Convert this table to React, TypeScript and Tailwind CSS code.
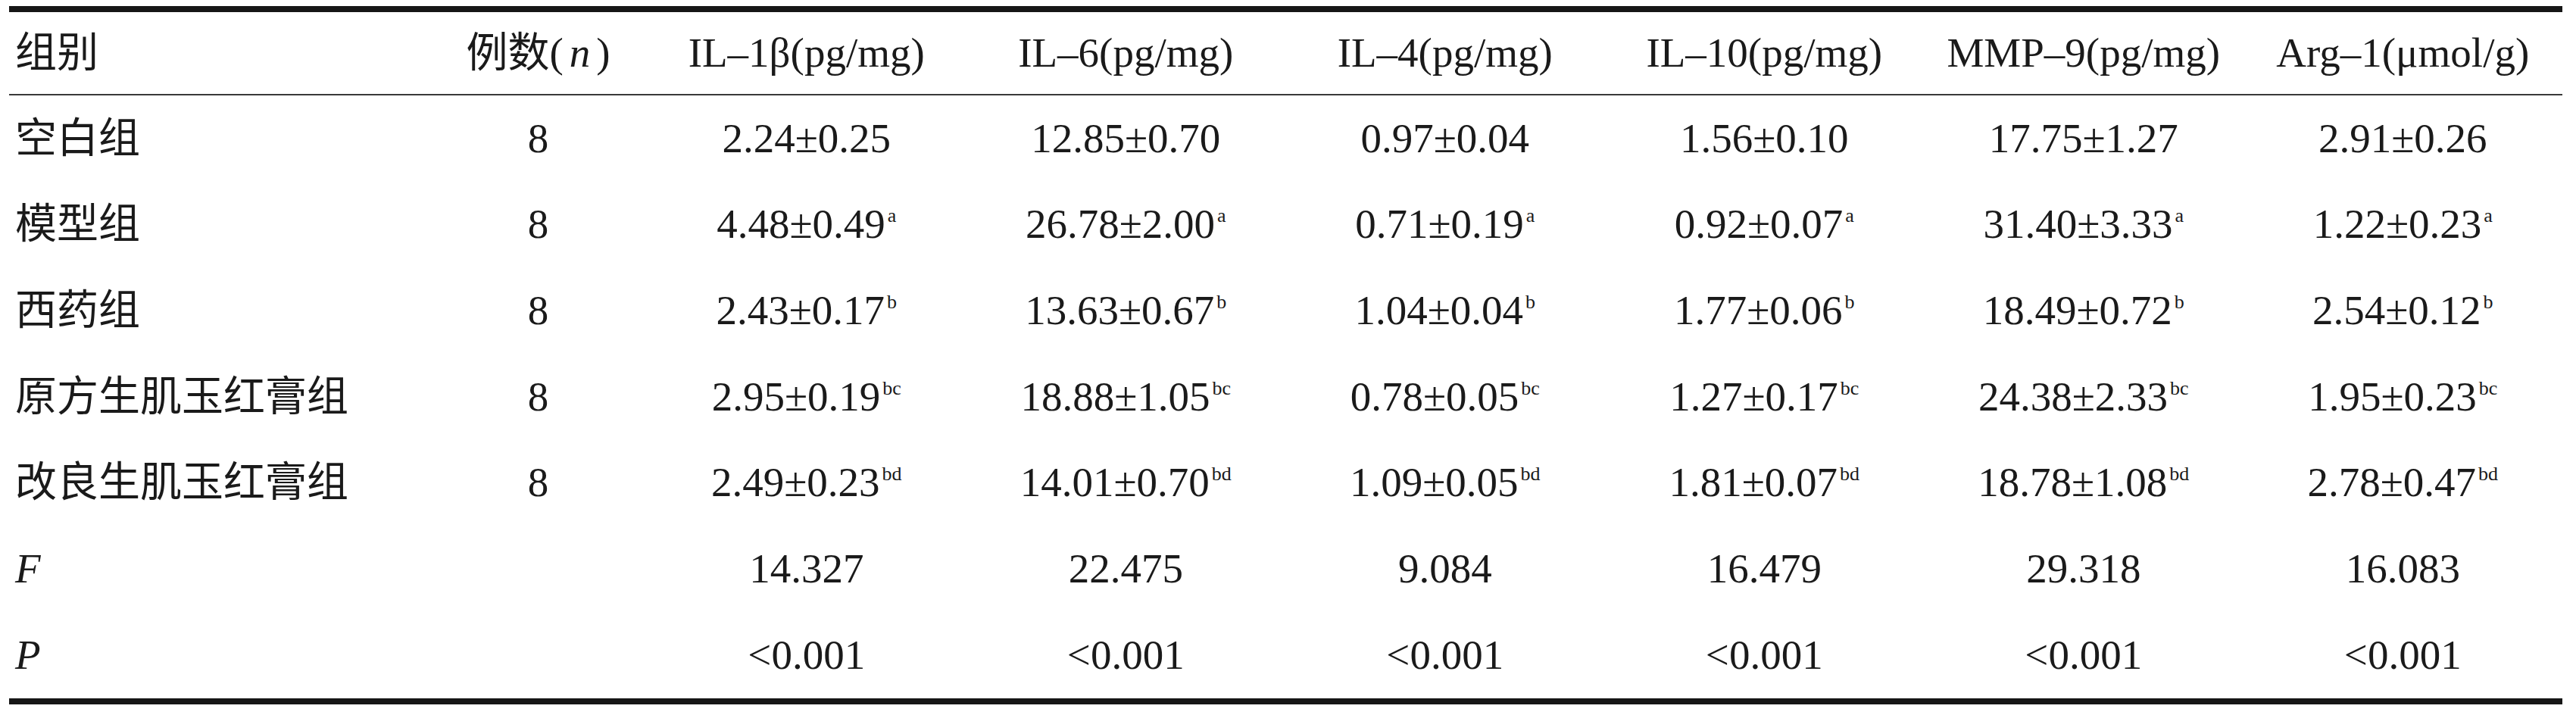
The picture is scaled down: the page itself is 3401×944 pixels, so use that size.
const headers = [
  "IL–1β(pg/mg)",
  "IL–6(pg/mg)",
  "IL–4(pg/mg)",
  "IL–10(pg/mg)",
  "MMP–9(pg/mg)",
  "Arg–1(μmol/g)",
];

type Cell = [string, string];

const groups: { name: string; n: string; cells: Cell[] }[] = [
  {
    name: "空白组",
    n: "8",
    cells: [
      ["2.24±0.25", ""],
      ["12.85±0.70", ""],
      ["0.97±0.04", ""],
      ["1.56±0.10", ""],
      ["17.75±1.27", ""],
      ["2.91±0.26", ""],
    ],
  },
  {
    name: "模型组",
    n: "8",
    cells: [
      ["4.48±0.49", "a"],
      ["26.78±2.00", "a"],
      ["0.71±0.19", "a"],
      ["0.92±0.07", "a"],
      ["31.40±3.33", "a"],
      ["1.22±0.23", "a"],
    ],
  },
  {
    name: "西药组",
    n: "8",
    cells: [
      ["2.43±0.17", "b"],
      ["13.63±0.67", "b"],
      ["1.04±0.04", "b"],
      ["1.77±0.06", "b"],
      ["18.49±0.72", "b"],
      ["2.54±0.12", "b"],
    ],
  },
  {
    name: "原方生肌玉红膏组",
    n: "8",
    cells: [
      ["2.95±0.19", "bc"],
      ["18.88±1.05", "bc"],
      ["0.78±0.05", "bc"],
      ["1.27±0.17", "bc"],
      ["24.38±2.33", "bc"],
      ["1.95±0.23", "bc"],
    ],
  },
  {
    name: "改良生肌玉红膏组",
    n: "8",
    cells: [
      ["2.49±0.23", "bd"],
      ["14.01±0.70", "bd"],
      ["1.09±0.05", "bd"],
      ["1.81±0.07", "bd"],
      ["18.78±1.08", "bd"],
      ["2.78±0.47", "bd"],
    ],
  },
];

const stats = [
  { label: "F", values: ["14.327", "22.475", "9.084", "16.479", "29.318", "16.083"] },
  { label: "P", values: ["<0.001", "<0.001", "<0.001", "<0.001", "<0.001", "<0.001"] },
];

const grid = "grid grid-cols-[555px_287px_repeat(6,1fr)] items-center";

const App = () => {
  return (
    <div className="w-[3401px] h-[944px] bg-white pt-[8px] pl-[12px] pr-[18px] text-[#1a1a1a] text-[55px] font-['Liberation_Serif','Noto_Sans_CJK_SC',serif]">
      <div className="border-t-[8px] border-b-[8px] border-[#161616]">
        {/* Header */}
        <div className={`${grid} h-[110px] border-b-2 border-[#3a3a3a]`}>
          <div className="pl-[8px] whitespace-nowrap">组别</div>
          <div className="text-center whitespace-nowrap">
            例数(<span className="italic mx-[8px]">n</span>)
          </div>
          {headers.map(h => (
            <div key={h} className="text-center whitespace-nowrap">
              {h}
            </div>
          ))}
        </div>

        {/* Groups */}
        {groups.map(g => (
          <div key={g.name} className={`${grid} h-[113.7px]`}>
            <div className="pl-[8px] whitespace-nowrap">{g.name}</div>
            <div className="text-center">{g.n}</div>
            {g.cells.map(([v, s], i) => (
              <div key={i} className="text-center whitespace-nowrap">
                {v}
                {s && <span className="text-[26px] align-[21px] ml-[3px]">{s}</span>}
              </div>
            ))}
          </div>
        ))}

        {/* F / P */}
        {stats.map(r => (
          <div key={r.label} className={`${grid} h-[113.7px]`}>
            <div className="pl-[8px] italic">{r.label}</div>
            <div />
            {r.values.map((v, i) => (
              <div key={i} className="text-center whitespace-nowrap">
                {v}
              </div>
            ))}
          </div>
        ))}
      </div>
    </div>
  );
};

export default App;
